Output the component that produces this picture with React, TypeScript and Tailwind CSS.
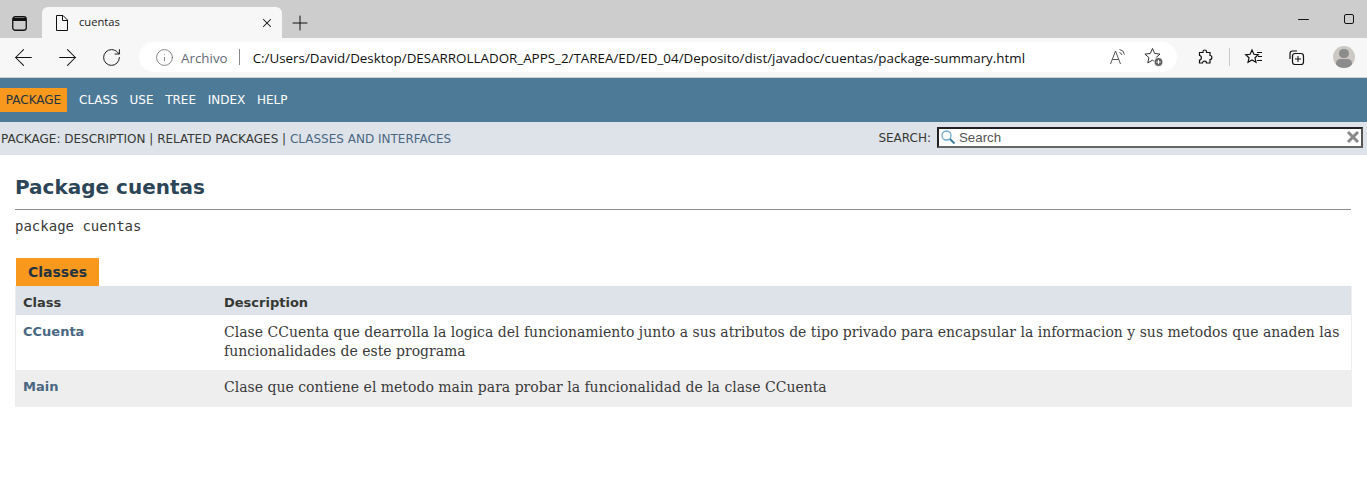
import React from 'react';
import { ArrowLeft, ArrowRight, RotateCw, X, Plus, Minus, Info } from 'lucide-react';

const Ico = ({ children, className = '' }: { children: React.ReactNode; className?: string }) => (
  <svg viewBox="0 0 20 20" fill="none" stroke="currentColor" strokeWidth="1" className={`w-5 h-5 shrink-0 ${className}`}>
    {children}
  </svg>
);

const BrowserChrome = () => (
  <div className="font-['Open_Sans',sans-serif] text-[#1a1a1a]">
    {/* Tab strip */}
    <div className="h-[38px] bg-[#cdcdcd] flex items-end">
      <div className="w-[42px] h-[38px] flex items-center justify-center pt-[9px] pr-[4px]">
        <svg viewBox="0 0 15 15" fill="none" stroke="currentColor" className="w-[15px] h-[15px] text-[#111]">
          <rect x="0.750" y="0.750" width="13.500" height="13.500" rx="2.500" strokeWidth="1.300" />
          <path d="M1 3.500h13" strokeWidth="3" />
        </svg>
      </div>
      <div className="w-[240px] h-[31px] bg-[#f7f7f7] rounded-t-[6px] flex items-center pl-[10px] pr-[8px]">
        <Ico className="text-[#111]">
          <path d="M4.500 2.500h6.500l4.500 4.500v10.500h-11zM10.500 2.500V7.500h5" />
        </Ico>
        <span className="ml-[7px] text-[11.200px] flex-1">cuentas</span>
        <X className="w-[14px] h-[14px] text-[#111]" strokeWidth={1.8} />
      </div>
      <div className="h-[31px] w-[36px] flex items-center justify-center">
        <Plus className="w-6 h-6 text-[#111]" strokeWidth={1} />
      </div>
      <div className="flex-1" />
      <div className="h-[38px] flex items-center pr-[13px]">
        <Minus className="w-[17px] h-[17px] text-[#111] mr-[32px]" strokeWidth={1.4} />
        <svg viewBox="0 0 10 10" fill="none" stroke="currentColor" className="w-[10px] h-[10px] text-[#111]">
          <rect x="0.500" y="0.500" width="9" height="9" rx="1.500" />
        </svg>
      </div>
    </div>
    {/* Toolbar */}
    <div className="h-[39.500px] bg-[#f7f7f7] flex items-center border-b border-[#d0d0d0]">
      <div className="w-[139px] flex items-center pl-[9.500px] shrink-0">
        <ArrowLeft className="w-[27px] h-[27px] text-[#111]" strokeWidth={0.9} />
        <ArrowRight className="w-[27px] h-[27px] text-[#111] ml-[17px]" strokeWidth={0.9} />
        <RotateCw className="w-[21px] h-[21px] text-[#111] ml-[20px]" strokeWidth={1.1} />
      </div>
      <div className="w-[1038px] h-[30px] bg-white rounded-full flex items-center pl-[16px] pr-[13px] text-[13.390px]">
        <Info className="w-[19px] h-[19px] text-[#666]" strokeWidth={1} />
        <span className="ml-[7px] pt-[2px] text-[#5f6b75]">Archivo</span>
        <span className="ml-[11px] mr-[13px] w-px h-[16px] bg-[#888]" />
        <span className="flex-1 pt-[2px] text-[#111] whitespace-nowrap">C:/Users/David/Desktop/DESARROLLADOR_APPS_2/TAREA/ED/ED_04/Deposito/dist/javadoc/cuentas/package-summary.html</span>
        <Ico className="text-[#555]">
          <path d="M1.500 17 6.500 4l5 13M3.300 12.500h6.400" />
          <path d="M10.500 2.500a6 6 0 0 1 5 5M10.500 5.500a3.500 3.500 0 0 1 2.500 2.500" />
        </Ico>
        <Ico className="text-[#333] ml-[15px]">
          <path d="m8.500 1.500 2.200 5 5.300.6-4 3.500 1.100 5.300-4.600-2.700-4.700 2.700 1.100-5.300-4-3.500 5.400-.6z" />
          <circle cx="14.500" cy="15" r="4.500" fill="#5c5c5c" stroke="#fff" />
          <path d="M14.500 12.800v4.400M12.300 15h4.400" stroke="#fff" />
        </Ico>
      </div>
      <div className="flex-1 flex items-center pl-[18px] text-[#111]">
        <Ico>
          <path strokeWidth="1.200" d="M8 4.500c0-2 3.500-2 3.500 0v1h3.500v3c2.500 0 2.500 4 0 4v3.500h-3.500c0-2.500-4-2.500-4 0H4.500v-3c2.500 0 2.500-4.500 0-4.500V5.500H8z" />
        </Ico>
        <span className="w-px h-[18px] bg-[#c8c8c8] mx-[14px]" />
        <Ico>
          <path strokeWidth="1.200" d="m8 3 1.900 4.300 4.400.5-3.300 3 1 4.500L8 13l-4 2.300 1-4.500-3.300-3 4.400-.5z" />
          <path d="M13 5.500h5M14 9.500h4M13 13.500h5" />
        </Ico>
        <Ico className="ml-[22px]">
          <path strokeWidth="1.200" d="M4 12V6.500A2.500 2.500 0 0 1 6.500 4H11" />
          <rect strokeWidth="1.200" x="6.500" y="6.500" width="11" height="11" rx="2.500" />
          <path d="M12 9v6M9 12h6" />
        </Ico>
        <div className="ml-[27px] w-[22px] h-[22px] rounded-full bg-[#ccc9c5] overflow-hidden flex flex-col items-center shrink-0">
          <div className="w-[10px] h-[10px] rounded-full bg-[#8c8c8c] mt-[3px]" />
          <div className="w-[16px] h-[10px] rounded-full bg-[#8c8c8c] mt-[1px]" />
        </div>
      </div>
    </div>
  </div>
);

const navItems = ['CLASS', 'USE', 'TREE', 'INDEX', 'HELP'];

const Row = ({ name, odd, children }: { name: string; odd?: boolean; children: React.ReactNode }) => (
  <div className={`grid grid-cols-[208px_1fr] ${odd ? 'bg-[#eeeeef]' : 'bg-white'}`}>
    <div className="pl-[7px] pt-[8px] pb-[8px] text-[13px] font-bold text-[#4A6782] leading-[18px]">{name}</div>
    <div className={`pt-[8px] pr-[8px] font-['DejaVu_Serif',serif] text-[14px] leading-[19.600px] text-[#3a3a3a] ${odd ? 'pb-[9px]' : 'pb-[8.300px]'}`}>
      {children}
    </div>
  </div>
);

export default function App() {
  return (
    <div className="w-[1367px] h-[494px] overflow-hidden bg-white font-['DejaVu_Sans',sans-serif]">
      <BrowserChrome />

      {/* Top nav */}
      <div className="h-[44px] bg-[#4D7A97] flex items-start pt-[10px] text-[12px] text-white">
        <span className="h-[24px] w-[67px] bg-[#F8981D] text-[#253441] flex items-center justify-center">PACKAGE</span>
        <div className="flex gap-[11.700px] ml-[12px] h-[24px] items-center">
          {navItems.map((item) => (
            <span key={item}>{item}</span>
          ))}
        </div>
      </div>

      {/* Sub nav */}
      <div className="h-[33px] bg-[#dee3e9] flex items-center justify-between pl-[1px] pr-[4px] text-[12px] text-[#353833]">
        <div className="mt-[1px]">
          PACKAGE: DESCRIPTION | RELATED PACKAGES | <span className="text-[#4A6782]">CLASSES AND INTERFACES</span>
        </div>
        <div className="flex items-center mb-[2px]">
          <span className="pt-[2px]">SEARCH:</span>
          <div className="ml-[6px] w-[426px] h-[21px] bg-white border-2 border-t-[#222] border-l-[#222] border-r-[#555] border-b-[#666] flex items-center pl-[1px] pr-[1px]">
            <svg viewBox="0 0 16 16" fill="none" className="w-[16px] h-[16px] shrink-0">
              <circle cx="6.500" cy="6.500" r="4.500" stroke="#6aa8cc" strokeWidth="1.300" />
              <path d="m10 10 4.500 4.500" stroke="#3d7fa6" strokeWidth="2" />
            </svg>
            <span className="ml-[3px] pt-[1px] flex-1 font-['Liberation_Sans',sans-serif] text-[13.300px] text-[#555]">Search</span>
            <svg viewBox="0 0 14 14" className="w-[14px] h-[14px] shrink-0">
              <path d="m2 2 10 10M12 2 2 12" stroke="#888" strokeWidth="3" />
            </svg>
          </div>
        </div>
      </div>

      {/* Page content */}
      <main className="pl-[15px] pr-[15px] text-[#353833]">
        <h1 className="mt-[19px] text-[20px] leading-[26px] font-bold text-[#2c4557]">Package cuentas</h1>
        <div className="mt-[9px] mr-[1px] h-[1px] bg-[#8e8e8e]" />
        <div className="mt-[8px] font-['DejaVu_Sans_Mono',monospace] text-[14px] leading-[16px] text-[#3a3a3a]">package cuentas</div>

        <div className="mt-[24px] ml-[1px] w-[83px] h-[28px] pt-[2px] bg-[#F8981D] text-[#253441] text-[14px] font-bold flex items-center justify-center">
          Classes
        </div>
        <div className="w-[1337px] border-x border-[#eeeeef] text-[#353833]">
          <div className="grid grid-cols-[208px_1fr] h-[29px] bg-[#dee3e9] items-center text-[13px] font-bold pt-[6px]">
            <div className="pl-[7px]">Class</div>
            <div>Description</div>
          </div>
          <Row name="CCuenta">
            Clase CCuenta que dearrolla la logica del funcionamiento junto a sus atributos de tipo privado para encapsular la informacion y sus metodos que anaden las funcionalidades de este programa
          </Row>
          <Row name="Main" odd>
            Clase que contiene el metodo main para probar la funcionalidad de la clase CCuenta
          </Row>
        </div>
      </main>
    </div>
  );
}
